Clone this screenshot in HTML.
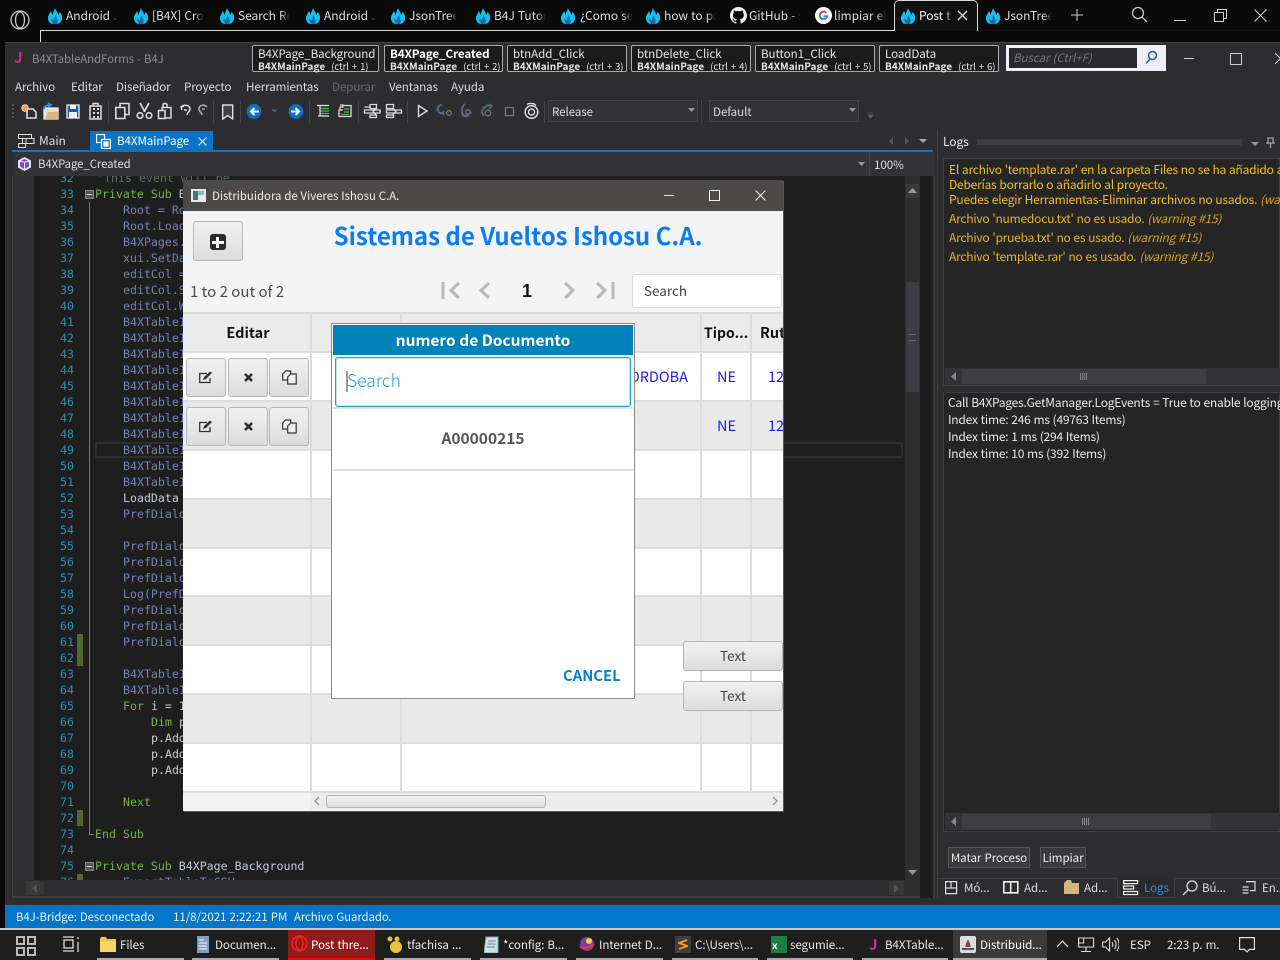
<!DOCTYPE html>
<html><head><meta charset="utf-8">
<style>
html,body{margin:0;padding:0;background:#0a0a0a}
#r{position:relative;width:1280px;height:960px;overflow:hidden;background:#0a0a0a;font-family:"Noto Sans CJK SC","Liberation Sans",sans-serif;font-size:11.6px;letter-spacing:-.08px;word-spacing:.6px;color:#ddd}
#r div,#r span.a,#r svg.a{position:absolute}
.t{white-space:nowrap;line-height:16px;height:16px}
.f{overflow:hidden;-webkit-mask-image:linear-gradient(90deg,#000 82%,transparent);mask-image:linear-gradient(90deg,#000 82%,transparent);font-size:12px}
.bm{height:27px;top:45px;border:1px solid #a9a9a9;border-radius:2px;background:#1b1b1c;box-sizing:border-box;width:120px}
.bm b,.bm i{position:absolute;left:5px;white-space:nowrap;font-style:normal}
.bm i.n{top:1px;font-size:11.6px;line-height:15px;color:#e6e6e6}
.bm i.s{top:14px;font-size:9.5px;line-height:11px;color:#e6e6e6;word-spacing:1px}
.bm i.s b{position:static;font-size:10px;letter-spacing:.05px}
.m{top:79px;color:#ddd;line-height:16px;white-space:nowrap}
.ln{left:34px;width:40px;text-align:right;color:#2b91af;font:11.6px/16px "DejaVu Sans Mono",monospace;height:16px;letter-spacing:0;word-spacing:0}
.c{left:95px;font:11.6px/16px "DejaVu Sans Mono",monospace;height:16px;white-space:pre;color:#7484b0;letter-spacing:0;word-spacing:0}
.k{color:#6fb544}.w{color:#c4cbd6}
.btn{background:linear-gradient(#f1f1f1,#dcdcdc);border:1px solid #b6b6b6;border-radius:3px;box-sizing:border-box}
.tk{top:937px;color:#e8e8e8;line-height:16px;white-space:nowrap}
.ul{top:958px;height:2px;background:#aaa}
.v{background:#dcdcdc;width:2px}
.h{background:#dcdcdc;height:2px}
.lg{font-size:12px;letter-spacing:-.22px;word-spacing:.4px;line-height:15px}
</style></head><body>
<svg width="0" height="0" style="position:absolute"><defs>
<symbol id="fl" viewBox="0 0 16 16"><path d="M1 9C2 6 3 5 4 3c1 2 1 3 1.500 4C6 5 7 3 8 0c1 3 3 4 3 7 1-1 1.500-2 1.500-3 2 2 3 4 2.500 7-.5 3-3 5-5 5H6C3 16 .5 13 1 9z" fill="#16c0ee"/><path d="M7 16c-2-1-3-3-2.500-6 1 1 1.500 2 2.500 2.500C7 10 8 8 9 7c0 3 3 5 1 9z" fill="#0b6fae"/></symbol>
</defs></svg>
<div id="r">

<!-- browser bar -->
<svg class="a" style="left:9px;top:9px" width="22" height="22" viewBox="0 0 22 22" fill="none" stroke="#c8c8c8" stroke-width="1.300"><circle cx="11" cy="11" r="9"/><ellipse cx="11" cy="11" rx="4.500" ry="8"/></svg>
<div style="left:40px;top:30px;width:854px;height:1px;background:#d8d8d8"></div>
<div style="left:978px;top:30px;width:302px;height:1px;background:#111"></div>
<div style="left:40px;top:30px;width:1px;height:12px;background:#d8d8d8"></div>
<div style="left:894px;top:0;width:84px;height:31px;background:#111;border:1px solid #d8d8d8;border-bottom:0;border-radius:5px 5px 0 0;box-sizing:border-box"></div>
<svg class="a" style="left:47px;top:8px" width="16" height="16"><use href="#fl"/></svg>
<svg class="a" style="left:133px;top:8px" width="16" height="16"><use href="#fl"/></svg>
<svg class="a" style="left:219px;top:8px" width="16" height="16"><use href="#fl"/></svg>
<svg class="a" style="left:305px;top:8px" width="16" height="16"><use href="#fl"/></svg>
<svg class="a" style="left:390px;top:8px" width="16" height="16"><use href="#fl"/></svg>
<svg class="a" style="left:475px;top:8px" width="16" height="16"><use href="#fl"/></svg>
<svg class="a" style="left:560px;top:8px" width="16" height="16"><use href="#fl"/></svg>
<svg class="a" style="left:645px;top:8px" width="16" height="16"><use href="#fl"/></svg>
<svg class="a" style="left:730px;top:7px" width="17" height="17" viewBox="0 0 16 16"><path fill="#eee" d="M8 0C3.600 0 0 3.600 0 8c0 3.500 2.300 6.500 5.500 7.600.4.100.5-.2.500-.4v-1.400c-2.200.5-2.700-1-2.700-1-.4-.9-.9-1.200-.9-1.200-.7-.5.100-.5.100-.5.800.1 1.200.8 1.200.8.700 1.200 1.900.9 2.300.7.100-.5.300-.9.500-1.100-1.800-.2-3.700-.9-3.700-4 0-.9.300-1.600.8-2.100-.1-.2-.4-1 .1-2.100 0 0 .7-.2 2.200.8.600-.2 1.300-.3 2-.3s1.400.1 2 .3c1.500-1 2.200-.8 2.200-.8.400 1.100.2 1.900.1 2.100.5.600.8 1.300.8 2.100 0 3.100-1.900 3.700-3.700 3.900.3.300.6.800.6 1.500v2.200c0 .2.100.5.600.4C13.700 14.500 16 11.500 16 8c0-4.400-3.600-8-8-8z"/></svg>
<svg class="a" style="left:815px;top:7px" width="17" height="17" viewBox="0 0 18 18"><circle cx="9" cy="9" r="9" fill="#fff"/><path d="M9 5a4 4 0 1 0 3.900 4.800H9" fill="none" stroke="#4285f4" stroke-width="2"/><path d="M5.500 7A4 4 0 0 1 12 6" fill="none" stroke="#ea4335" stroke-width="2"/><path d="M5.300 10.500A4 4 0 0 0 9 13" fill="none" stroke="#34a853" stroke-width="2"/></svg>
<svg class="a" style="left:900px;top:8px" width="16" height="16"><use href="#fl"/></svg>
<svg class="a" style="left:985px;top:8px" width="16" height="16"><use href="#fl"/></svg>
<div class="t f" style="left:66px;top:8px;width:52px">Android J</div>
<div class="t f" style="left:152px;top:8px;width:52px">[B4X] Cross</div>
<div class="t f" style="left:238px;top:8px;width:52px">Search Re</div>
<div class="t f" style="left:324px;top:8px;width:52px">Android J</div>
<div class="t f" style="left:409px;top:8px;width:48px">JsonTree -</div>
<div class="t f" style="left:494px;top:8px;width:52px">B4J Tutori</div>
<div class="t f" style="left:580px;top:8px;width:52px">¿Como se</div>
<div class="t f" style="left:664px;top:8px;width:52px">how to pa</div>
<div class="t f" style="left:749px;top:8px;width:52px">GitHub - s</div>
<div class="t f" style="left:834px;top:8px;width:52px">limpiar el</div>
<div class="t f" style="left:919px;top:8px;width:33px;color:#fff">Post th</div>
<div class="t f" style="left:1004px;top:8px;width:48px">JsonTree -</div>
<svg class="a" style="left:957px;top:10px" width="11" height="11" stroke="#ddd" stroke-width="1.300"><path d="M1 1l9 9M10 1l-9 9"/></svg>
<svg class="a" style="left:1071px;top:9px" width="12" height="12" stroke="#ccc"><path d="M6 0v12M0 6h12"/></svg>
<svg class="a" style="left:1131px;top:6px" width="17" height="17" fill="none" stroke="#c8c8c8" stroke-width="1.300"><circle cx="7" cy="7" r="5.500"/><path d="M11 11l5 5"/></svg>
<div style="left:1174px;top:20px;width:12px;height:1px;background:#ccc"></div>
<svg class="a" style="left:1214px;top:9px" width="13" height="13" fill="none" stroke="#ccc"><path d="M.5 3.500h9v9h-9zM3.500 3V.5h9v9H10"/></svg>
<svg class="a" style="left:1254px;top:9px" width="13" height="13" stroke="#ccc" stroke-width="1.100"><path d="M.5.500l12 12M12.500.5l-12 12"/></svg>

<!-- IDE window -->
<div style="left:5px;top:42px;width:1275px;height:863px;background:#2d2d30;border-top:1px solid #444;box-sizing:border-box"></div>
<div style="left:0;top:905px;width:1280px;height:23px;background:#0a0a0a"></div>
<div class="t" style="left:14px;top:50px;color:#d6278f;font-weight:bold;font-size:15px">J</div>
<div class="t" style="left:32px;top:51px;color:#8d8d8d;font-size:11.4px">B4XTableAndForms - B4J</div>

<div class="bm" style="left:252px;width:127px"><i class="n">B4XPage_Background</i><i class="s"><b>B4XMainPage</b>&nbsp; (ctrl + 1)</i></div>
<div class="bm" style="left:384px;width:119px"><i class="n" style="font-weight:bold;color:#fff">B4XPage_Created</i><i class="s"><b>B4XMainPage</b>&nbsp; (ctrl + 2)</i></div>
<div class="bm" style="left:507px"><i class="n">btnAdd_Click</i><i class="s"><b>B4XMainPage</b>&nbsp; (ctrl + 3)</i></div>
<div class="bm" style="left:631px"><i class="n">btnDelete_Click</i><i class="s"><b>B4XMainPage</b>&nbsp; (ctrl + 4)</i></div>
<div class="bm" style="left:755px"><i class="n">Button1_Click</i><i class="s"><b>B4XMainPage</b>&nbsp; (ctrl + 5)</i></div>
<div class="bm" style="left:879px"><i class="n">LoadData</i><i class="s"><b>B4XMainPage</b>&nbsp; (ctrl + 6)</i></div>

<div style="left:1006px;top:45px;width:160px;height:26px;background:#eef0f5"></div>
<div style="left:1009px;top:48px;width:128px;height:20px;background:#2a2a2c"></div>
<div class="t" style="left:1013px;top:50px;color:#777;font-style:italic;font-size:11.6px">Buscar (Ctrl+F)</div>
<svg class="a" style="left:1144px;top:50px" width="14" height="15" fill="none" stroke="#2a5fa8" stroke-width="1.600"><circle cx="8.500" cy="5.500" r="4"/><path d="M6 9l-4 4.500"/></svg>
<div style="left:1184px;top:58px;width:10px;height:1px;background:#ccc"></div>
<div style="left:1230px;top:53px;width:10px;height:10px;border:1px solid #ccc"></div>
<svg class="a" style="left:1275px;top:52px" width="5" height="12" stroke="#ccc"><path d="M0 1l11 11M11 1L0 12"/></svg>

<div class="m" style="left:15px">Archivo</div>
<div class="m" style="left:71px">Editar</div>
<div class="m" style="left:116px">Diseñador</div>
<div class="m" style="left:184px">Proyecto</div>
<div class="m" style="left:246px">Herramientas</div>
<div class="m" style="left:332px;color:#6a6a6a">Depurar</div>
<div class="m" style="left:389px">Ventanas</div>
<div class="m" style="left:451px">Ayuda</div>

<!-- toolbar -->
<svg class="a" style="left:10px;top:100px" width="560" height="24" viewBox="0 0 560 24" fill="none" stroke="#dcdcdc" stroke-width="1.300">
<path d="M2 5h2M2 9h2M2 13h2M2 17h2" stroke="#555" stroke-width="2"/>
<path d="M17 9h6l3 3v6h-9z" fill="#2d2d30" stroke-width="1.600"/><circle cx="15" cy="8" r="3.200" fill="#e8a040" stroke="#f4d9a8" stroke-width="1"/>
<path d="M34 8h14v11H34z" fill="#e9dcc4" stroke="#eee"/><path d="M35 19l3-7h10v7z" fill="#d9b582" stroke="none"/><path d="M34 9c0-3 3-4 6-4M38 3l3 2-3 2" stroke="#2a93dc" stroke-width="1.800"/>
<path d="M57 5h12v13H57z" fill="#0e5fb4" stroke="#f0f0f0"/><path d="M60 5h6v4h-6zM59 12h8v6h-8z" fill="#f0f0f0" stroke="none"/>
<path d="M80 6h11v13H80zM83 6V3.500h5V6" stroke-width="1.500"/><path d="M83 8h2v2h-2zM87 8h2v2h-2zM83 12h2v2h-2zM87 12h2v2h-2zM83 16h2v2h-2zM87 16h2v2h-2z" fill="#dcdcdc" stroke="none"/>
<path d="M98.500 1v22" stroke="#444" stroke-width="1"/>
<path d="M110 3.500h9v11h-9z" stroke-width="1.600"/><path d="M105.800 7.500h9v11h-9z" fill="#2d2d30" stroke-width="1.600"/>
<path d="M130 3l5 9M139 3l-5 9" stroke-width="1.800"/><circle cx="130" cy="15.500" r="2.800" stroke-width="1.600"/><circle cx="139" cy="15.500" r="2.800" stroke-width="1.600"/>
<path d="M153 8V5c0-2 4-2 4 0v3M152 7.500h9v10.500h-9z" stroke-width="1.500"/><path d="M148.500 10.500h6.500v8h-6.500z" fill="#2d2d30" stroke-width="1.500"/>
<path d="M171 7c3-3 9-2 9 2 0 3-3 3-3 6M174 6l-3 1 1 3M174 10h3" stroke-width="1.500"/>
<path d="M197 7c-3-3-8-2-8 2 0 3 3 3 3 6M192 9h3" stroke="#aaa" stroke-width="1.600"/>
<path d="M203.500 1v22" stroke="#444" stroke-width="1"/>
<path d="M212.700 5h10v14l-5-3.500-5 3.500z" fill="#3f3f42" stroke-width="1.400"/>
<path d="M230.500 1v22" stroke="#444" stroke-width="1"/>
<circle cx="244" cy="11.500" r="6.800" fill="#0f6ec2" stroke="#0f6ec2"/><path d="M249 11.500h-8M244.500 8l-3.500 3.500 3.500 3.500" stroke="#fff" stroke-width="2"/>
<path d="M261.500 9.500h6l-3 3z" fill="#3a6ea8" stroke="none"/>
<circle cx="286" cy="11.500" r="6.800" fill="#0f6ec2" stroke="#0f6ec2"/><path d="M281 11.500h8M285.500 8l3.500 3.500-3.500 3.500" stroke="#fff" stroke-width="2"/>
<path d="M299.500 1v22" stroke="#444" stroke-width="1"/>
<path d="M307 5.500h12"/><path d="M310 8.500h9M310 11h9M310 13.500h9" stroke="#4caf50"/><path d="M308 16h11"/><path d="M310 5.500v11"/>
<path d="M333 5.500h8v11h-12v-7" /><path d="M330 5h3v2h-3v3h3" stroke-width="1.200"/><path d="M334 9h5M334 12h5M331 14.500h8" stroke="#4caf50"/>
<path d="M348.500 1v22" stroke="#444" stroke-width="1"/>
<path d="M354.500 7h6M360 4.500h6.500v4H360zM354.500 10h15.500v3h-15.500zM360 15h6.500v2.500H360z" stroke-width="1.300"/><path d="M366 8.500l-3 3 3 3" stroke="#dcdcdc"/>
<path d="M376.500 4.500h7v4h-7zM376.500 10h15v3h-15zM376.500 15h7v2.500h-7z" stroke-width="1.300"/><path d="M383 8.500l3 3-3 3" stroke="#dcdcdc"/>
<path d="M397.500 1v22" stroke="#444" stroke-width="1"/>
<path d="M408.500 5.500l8.500 5.500-8.500 5.500z" stroke-width="1.400"/>
<path d="M432 5c-5 0-6 6-2 8h4" stroke="#4d6d84" stroke-width="2"/><path d="M434 11l-2 2 2 2" stroke="#4d6d84" stroke-width="1.500"/><circle cx="439" cy="13" r="2.300" stroke="#777"/>
<path d="M455 4c-4 3-4 9-1 12h4" stroke="#4d6d84" stroke-width="2"/><path d="M461 12l-3 4-2-2" stroke="#4d6d84" stroke-width="1.500"/><circle cx="458" cy="12" r="2.300" stroke="#777"/>
<path d="M482 6c-5-2-10 2-10 6 0 2 1 3 2 4" stroke="#4d6d84" stroke-width="2"/><path d="M479 4l3 2-3 3" stroke="#4d6d84" stroke-width="1.500"/><circle cx="478" cy="13" r="2.800" stroke="#777"/>
<path d="M495.500 7.500h8v8h-8z" stroke="#777"/>
<circle cx="521.500" cy="12" r="6.300" stroke-width="1.500"/><path d="M517 4.500c2-1.500 7-1.500 9 1M518.500 12a3 3 0 1 0 6 0 3 3 0 1 0-6 0" stroke-width="1.400"/>
<path d="M534.500 1v22" stroke="#444" stroke-width="1"/>
</svg>

<div style="left:548px;top:100px;width:150px;height:22px;background:#333337;border:1px solid #434346;box-sizing:border-box"></div>
<div class="t" style="left:552px;top:104px">Release</div>
<svg class="a" style="left:688px;top:108px" width="7" height="4"><path d="M0 0h7L3.500 4z" fill="#999"/></svg>
<div style="left:701px;top:100px;width:1px;height:24px;background:#444"></div>
<div style="left:709px;top:100px;width:150px;height:22px;background:#333337;border:1px solid #434346;box-sizing:border-box"></div>
<div class="t" style="left:713px;top:104px">Default</div>
<svg class="a" style="left:849px;top:108px" width="7" height="4"><path d="M0 0h7L3.500 4z" fill="#999"/></svg>
<svg class="a" style="left:867px;top:112px" width="7" height="7"><path d="M1 1h5M1 3h5l-2.500 3z" fill="#666" stroke="#666" stroke-width=".6"/></svg>

<!-- doc tabs -->
<div style="left:90px;top:131px;width:123px;height:20px;background:#0b74c9"></div>
<div style="left:12px;top:150px;width:921px;height:2px;background:#0b74c9"></div>
<svg class="a" style="left:18px;top:134px" width="18" height="14" fill="none" stroke="#ddd"><path d="M.5.500h13v4h-13zM4.500 5v4M.5 9.500h7v4h-7zM8 4.500h8v5H8z"/></svg>
<div class="t" style="left:39px;top:133px;font-size:12px">Main</div>
<svg class="a" style="left:96px;top:134px" width="15" height="15" fill="none" stroke="#fff" stroke-width="1.200"><path d="M.5.500h8v8h-8z"/><path d="M5.500 5.500h9v9h-9z" fill="#0b74c9"/><path d="M8 8h4v4H8z" fill="#fff"/></svg>
<div class="t" style="left:117px;top:133px;color:#fff">B4XMainPage</div>
<svg class="a" style="left:198px;top:137px" width="9" height="9" stroke="#e6e6e6" stroke-width="1.200"><path d="M.5.500l8 8M8.500.5l-8 8"/></svg>
<svg class="a" style="left:888px;top:136px" width="46" height="10"><path d="M5 1L1 5l4 4zM17 1l4 4-4 4z" fill="#555"/><path d="M31 3h8l-4 4z" fill="#aaa"/></svg>

<!-- sub row -->
<div style="left:13px;top:152px;width:922px;height:24px;background:#333337"></div>
<svg class="a" style="left:18px;top:157px" width="13" height="14" fill="#b197e8"><path d="M6.500 0L13 3.500v7L6.500 14 0 10.500v-7z" fill="#e8e3f6"/><path d="M6.500 2L11 4.500v5L6.500 12 2 9.500v-5z" fill="#7b4fc0"/><path d="M6.500 5L11 4.500M6.500 5L2 4.500M6.500 5v7" stroke="#e8e3f6" fill="none"/></svg>
<div class="t" style="left:38px;top:156px;font-size:11.4px">B4XPage_Created</div>
<svg class="a" style="left:858px;top:162px" width="7" height="4"><path d="M0 0h7L3.500 4z" fill="#999"/></svg>
<div style="left:869px;top:152px;width:1px;height:24px;background:#444"></div>
<div class="t" style="left:874px;top:157px">100%</div>
<svg class="a" style="left:920px;top:162px" width="7" height="4"><path d="M0 0h7L3.500 4z" fill="#999"/></svg>

<!-- code -->
<div style="left:13px;top:176px;width:892px;height:704px;background:#1e1e1e;overflow:hidden">
 <div style="left:0;top:0;width:21px;height:704px;background:#303032"></div>
</div>
<div style="left:13px;top:176px;width:892px;height:704px;overflow:hidden">
<div style="left:64px;top:458px;width:6px;height:32px;background:#4e6b2a"></div>
<div style="left:64px;top:634px;width:6px;height:16px;background:#4e6b2a"></div>
<div style="left:64px;top:698px;width:6px;height:16px;background:#4e6b2a"></div>
<div style="left:76px;top:26px;width:1px;height:632px;background:#777"></div>
<div style="left:76px;top:658px;width:5px;height:1px;background:#777"></div>
<div style="left:82px;top:266px;width:808px;height:16px;border:2px solid #2f2f2f;box-sizing:border-box"></div>
<div style="left:72px;top:14px;width:7px;height:7px;background:#555;border:1px solid #888"></div>
<div style="left:74px;top:18px;width:5px;height:1px;background:#ddd"></div>
<div style="left:72px;top:686px;width:7px;height:7px;background:#555;border:1px solid #888"></div>
<div style="left:74px;top:690px;width:5px;height:1px;background:#ddd"></div>

<div class="ln" style="left:21px;top:-6px">32</div><div class="c" style="left:84px;top:-6px;color:#5f6f5f">'This event will be</div>
<div class="ln" style="left:21px;top:10px">33</div><div class="c" style="left:82px;top:10px"><span class="k">Private Sub</span> <span class="w">B4XPage_Created</span></div>
<div class="ln" style="left:21px;top:26px">34</div><div class="c" style="left:110px;top:26px">Root = Root1</div>
<div class="ln" style="left:21px;top:42px">35</div><div class="c" style="left:110px;top:42px">Root.LoadLayout</div>
<div class="ln" style="left:21px;top:58px">36</div><div class="c" style="left:110px;top:58px">B4XPages.SetTitle</div>
<div class="ln" style="left:21px;top:74px">37</div><div class="c" style="left:110px;top:74px">xui.SetDataFolder</div>
<div class="ln" style="left:21px;top:90px">38</div><div class="c" style="left:110px;top:90px">editCol = B4XTable</div>
<div class="ln" style="left:21px;top:106px">39</div><div class="c" style="left:110px;top:106px">editCol.Searchable</div>
<div class="ln" style="left:21px;top:122px">40</div><div class="c" style="left:110px;top:122px">editCol.Width = 100</div>
<div class="ln" style="left:21px;top:138px">41</div><div class="c" style="left:110px;top:138px">B4XTable1.AddColumn</div>
<div class="ln" style="left:21px;top:154px">42</div><div class="c" style="left:110px;top:154px">B4XTable1.AddColumn</div>
<div class="ln" style="left:21px;top:170px">43</div><div class="c" style="left:110px;top:170px">B4XTable1.AddColumn</div>
<div class="ln" style="left:21px;top:186px">44</div><div class="c" style="left:110px;top:186px">B4XTable1.AddColumn</div>
<div class="ln" style="left:21px;top:202px">45</div><div class="c" style="left:110px;top:202px">B4XTable1.AddColumn</div>
<div class="ln" style="left:21px;top:218px">46</div><div class="c" style="left:110px;top:218px">B4XTable1.AddColumn</div>
<div class="ln" style="left:21px;top:234px">47</div><div class="c" style="left:110px;top:234px">B4XTable1.AddColumn</div>
<div class="ln" style="left:21px;top:250px">48</div><div class="c" style="left:110px;top:250px">B4XTable1.AddColumn</div>
<div class="ln" style="left:21px;top:266px">49</div><div class="c" style="left:110px;top:266px">B4XTable1.AddColumn</div>
<div class="ln" style="left:21px;top:282px">50</div><div class="c" style="left:110px;top:282px">B4XTable1.AddColumn</div>
<div class="ln" style="left:21px;top:298px">51</div><div class="c" style="left:110px;top:298px">B4XTable1.AddColumn</div>
<div class="ln" style="left:21px;top:314px">52</div><div class="c" style="left:110px;top:314px;color:#c4cbd6">LoadData</div>
<div class="ln" style="left:21px;top:330px">53</div><div class="c" style="left:110px;top:330px">PrefDialog.Initialize</div>
<div class="ln" style="left:21px;top:346px">54</div>
<div class="ln" style="left:21px;top:362px">55</div><div class="c" style="left:110px;top:362px">PrefDialog.Dialog</div>
<div class="ln" style="left:21px;top:378px">56</div><div class="c" style="left:110px;top:378px">PrefDialog.Dialog</div>
<div class="ln" style="left:21px;top:394px">57</div><div class="c" style="left:110px;top:394px">PrefDialog.Dialog</div>
<div class="ln" style="left:21px;top:410px">58</div><div class="c" style="left:110px;top:410px">Log(PrefDialog</div>
<div class="ln" style="left:21px;top:426px">59</div><div class="c" style="left:110px;top:426px">PrefDialog.Dialog</div>
<div class="ln" style="left:21px;top:442px">60</div><div class="c" style="left:110px;top:442px">PrefDialog.Dialog</div>
<div class="ln" style="left:21px;top:458px">61</div><div class="c" style="left:110px;top:458px">PrefDialog.Dialog</div>
<div class="ln" style="left:21px;top:474px">62</div>
<div class="ln" style="left:21px;top:490px">63</div><div class="c" style="left:110px;top:490px">B4XTable1.MaximumRows</div>
<div class="ln" style="left:21px;top:506px">64</div><div class="c" style="left:110px;top:506px">B4XTable1.NumberOfColumns</div>
<div class="ln" style="left:21px;top:522px">65</div><div class="c" style="left:110px;top:522px"><span class="k">For</span> <span class="w">i = 1 To 10</span></div>
<div class="ln" style="left:21px;top:538px">66</div><div class="c" style="left:138px;top:538px"><span class="k">Dim</span> <span class="w">p As Int</span></div>
<div class="ln" style="left:21px;top:554px">67</div><div class="c w" style="left:138px;top:554px;color:#c4cbd6">p.AddAll</div>
<div class="ln" style="left:21px;top:570px">68</div><div class="c w" style="left:138px;top:570px;color:#c4cbd6">p.AddAll</div>
<div class="ln" style="left:21px;top:586px">69</div><div class="c w" style="left:138px;top:586px;color:#c4cbd6">p.AddAll</div>
<div class="ln" style="left:21px;top:602px">70</div>
<div class="ln" style="left:21px;top:618px">71</div><div class="c k" style="left:110px;top:618px;color:#6fb544">Next</div>
<div class="ln" style="left:21px;top:634px">72</div>
<div class="ln" style="left:21px;top:650px">73</div><div class="c k" style="left:82px;top:650px;color:#6fb544">End Sub</div>
<div class="ln" style="left:21px;top:666px">74</div>
<div class="ln" style="left:21px;top:682px">75</div><div class="c" style="left:82px;top:682px"><span class="k">Private Sub</span> <span class="w">B4XPage_Background</span></div>
<div class="ln" style="left:21px;top:698px">76</div><div class="c" style="left:110px;top:698px">ExportTableToCSV</div>
</div>

<!-- code scrollbars -->
<div style="left:905px;top:176px;width:15px;height:720px;background:#2d2d30"></div>
<div style="left:906px;top:282px;width:13px;height:110px;background:#3e3e42"></div>
<div style="left:906px;top:184px;width:13px;height:14px;background:#3a3a3d"></div>
<svg class="a" style="left:908px;top:188px" width="9" height="5"><path d="M0 5h9L4.500 0z" fill="#999"/></svg>
<svg class="a" style="left:908px;top:870px" width="9" height="5"><path d="M0 0h9L4.500 5z" fill="#999"/></svg>
<div style="left:909px;top:334px;width:7px;height:5px;border-top:1px solid #666;border-bottom:1px solid #666"></div>
<div style="left:13px;top:880px;width:892px;height:16px;background:#2d2d30"></div>
<div style="left:26px;top:881px;width:18px;height:14px;background:#383839"></div>
<svg class="a" style="left:32px;top:884px" width="5" height="9"><path d="M5 0v9L0 4.500z" fill="#555"/></svg>
<div style="left:889px;top:881px;width:15px;height:14px;background:#383839"></div>
<svg class="a" style="left:894px;top:884px" width="5" height="9"><path d="M0 0v9l5-4.500z" fill="#555"/></svg>
<div style="left:12px;top:896px;width:923px;height:2px;background:#3f3f41"></div>
<div style="left:12px;top:176px;width:1px;height:720px;background:#3f3f41"></div>
<div style="left:920px;top:152px;width:15px;height:746px;background:#1c1c1c"></div>
<div style="left:933px;top:152px;width:2px;height:746px;background:#3f3f41"></div>
<div style="left:920px;top:152px;width:15px;height:24px;background:#333337"></div>
<div style="left:5px;top:125px;width:7px;height:780px;background:#2d2d30"></div>

<!-- Dialog -->
<div style="left:183px;top:180px;width:600px;height:631px;background:#f4f4f4;box-shadow:1px 1px 0 #555;overflow:hidden;letter-spacing:0;word-spacing:0" id="dlg">
 <div style="left:0;top:0;width:600px;height:31px;background:#4b4a48"></div>
 <svg class="a" style="left:8px;top:9px" width="15" height="13"><rect width="15" height="13" fill="#e8e8e8"/><rect x="2" y="2" width="5" height="9" fill="#46786f"/><rect x="7" y="2" width="6" height="4" fill="#8eb4d8"/></svg>
 <div class="t" style="left:29px;top:8px;color:#eee;font-size:11.4px;word-spacing:.3px">Distribuidora de Viveres Ishosu C.A.</div>
 <div style="left:481px;top:15px;width:10px;height:1px;background:#ddd"></div>
 <div style="left:526px;top:10px;width:9px;height:9px;border:1px solid #eee"></div>
 <svg class="a" style="left:572px;top:10px" width="11" height="11" stroke="#eee" stroke-width="1.100"><path d="M.5.500l10 10M10.500.5l-10 10"/></svg>

 <div class="btn" style="left:10px;top:41px;width:50px;height:40px"></div>
 <div style="left:27px;top:54px;width:16px;height:16px;background:#2b2b2b;border-radius:3px"></div>
 <div style="left:29px;top:61px;width:12px;height:3px;background:#fff"></div>
 <div style="left:33px;top:57px;width:3px;height:11px;background:#fff"></div>

 <div class="t" style="left:0;width:670px;text-align:center;top:40px;height:30px;line-height:30px;color:#0a7df5;font-weight:bold;font-size:24px">Sistemas de Vueltos Ishosu C.A.</div>
 <div class="t" style="left:7px;top:104px;color:#4a4a4a;font-size:15px;line-height:16px">1 to 2 out of 2</div>

 <svg class="a" style="left:258px;top:101px" width="175" height="20" fill="none" stroke="#b8b8b8" stroke-width="3"><path d="M2 1v17M18 2l-8 7.500 8 7.500M48 2l-8 7.500 8 7.500M124 2l8 7.500-8 7.500M156 2l8 7.500-8 7.500M172 1v17"/></svg>
 <div class="t" style="left:339px;top:101px;height:20px;line-height:20px;color:#111;font-weight:bold;font-size:18px;font-family:'Liberation Sans',sans-serif">1</div>
 <div style="left:449px;top:94px;width:150px;height:34px;background:#fff;border:1px solid #d8d8d8;border-radius:3px;box-sizing:border-box"></div>
 <div class="t" style="left:461px;top:102px;color:#444;font-size:13.5px">Search</div>

 <!-- table -->
 <div style="left:0;top:133px;width:600px;height:479px;background:#fff"></div>
 <div style="left:0;top:133px;width:600px;height:39px;background:#ebebeb"></div>
 <div style="left:0;top:222px;width:600px;height:48px;background:#e9e9e9"></div>
 <div style="left:0;top:319px;width:600px;height:48px;background:#e9e9e9"></div>
 <div style="left:0;top:416px;width:600px;height:48px;background:#e9e9e9"></div>
 <div style="left:0;top:513px;width:600px;height:49px;background:#e9e9e9"></div>
 <div class="h" style="left:0;top:132px;width:600px"></div>
 <div class="h" style="left:0;top:171px;width:600px"></div>
 <div class="h" style="left:0;top:220px;width:600px"></div>
 <div class="h" style="left:0;top:269px;width:600px"></div>
 <div class="h" style="left:0;top:318px;width:600px"></div>
 <div class="h" style="left:0;top:367px;width:600px"></div>
 <div class="h" style="left:0;top:415px;width:600px"></div>
 <div class="h" style="left:0;top:464px;width:600px"></div>
 <div class="h" style="left:0;top:513px;width:600px"></div>
 <div class="h" style="left:0;top:562px;width:600px"></div>
 <div class="h" style="left:0;top:611px;width:600px"></div>
 <div class="v" style="left:127px;top:133px;height:478px"></div>
 <div class="v" style="left:217px;top:133px;height:478px"></div>
 <div class="v" style="left:517px;top:133px;height:478px"></div>
 <div class="v" style="left:567px;top:133px;height:478px"></div>

 <div class="t" style="left:0;width:130px;text-align:center;top:145px;color:#111;font-weight:bold;font-size:14.5px">Editar</div>
 <div class="t" style="left:521px;top:145px;color:#111;font-weight:bold;font-size:14px">Tipo...</div>
 <div class="t" style="left:577px;top:145px;color:#111;font-weight:bold;font-size:14.5px">Rut</div>
 <div class="t" style="right:95px;top:189px;color:#1f1fe8;font-size:14.5px">CORDOBA</div>
 <div class="t" style="left:534px;top:189px;color:#1f1fe8;font-size:14.5px">NE</div>
 <div class="t" style="left:534px;top:238px;color:#1f1fe8;font-size:14.5px">NE</div>
 <div class="t" style="left:585px;top:189px;color:#1f1fe8;font-size:14.5px">12</div>
 <div class="t" style="left:585px;top:238px;color:#1f1fe8;font-size:14.5px">12</div>

 <div class="btn" style="left:3px;top:178px;width:40px;height:39px"></div>
 <div class="btn" style="left:45px;top:178px;width:40px;height:39px"></div>
 <div class="btn" style="left:86px;top:178px;width:40px;height:39px"></div>
 <div class="btn" style="left:3px;top:227px;width:40px;height:39px"></div>
 <div class="btn" style="left:45px;top:227px;width:40px;height:39px"></div>
 <div class="btn" style="left:86px;top:227px;width:40px;height:39px"></div>
 <svg class="a" style="left:16px;top:191px" width="14" height="13" fill="none" stroke="#333" stroke-width="1.300"><path d="M11 7v4.500H.7V2.500H8"/><path d="M5 6l-1 3 3-1 6-6-2-1.500z" fill="#333" stroke="none"/></svg>
 <svg class="a" style="left:16px;top:240px" width="14" height="13" fill="none" stroke="#333" stroke-width="1.300"><path d="M11 7v4.500H.7V2.500H8"/><path d="M5 6l-1 3 3-1 6-6-2-1.500z" fill="#333" stroke="none"/></svg>
 <svg class="a" style="left:61px;top:193px" width="9" height="9" stroke="#2b2b2b" stroke-width="2.600"><path d="M1 1l7 7M8 1L1 8"/></svg>
 <svg class="a" style="left:61px;top:242px" width="9" height="9" stroke="#2b2b2b" stroke-width="2.600"><path d="M1 1l7 7M8 1L1 8"/></svg>
 <svg class="a" style="left:99px;top:190px" width="15" height="15" fill="#f0f0f0" stroke="#333" stroke-width="1.200"><path d="M.7 10V4l3-3h5v9z"/><path d="M5.700 14V7l3-3h5.500v10z"/></svg>
 <svg class="a" style="left:99px;top:239px" width="15" height="15" fill="#f0f0f0" stroke="#333" stroke-width="1.200"><path d="M.7 10V4l3-3h5v9z"/><path d="M5.700 14V7l3-3h5.500v10z"/></svg>

 <!-- h scrollbar -->
 <div style="left:127px;top:613px;width:473px;height:17px;background:#ececec"></div>
 <div class="btn" style="left:143px;top:615px;width:220px;height:13px;border-radius:3px"></div>
 <svg class="a" style="left:131px;top:616px" width="6" height="10" fill="none" stroke="#888" stroke-width="1.200"><path d="M5 1L1 5l4 4"/></svg>
 <svg class="a" style="left:589px;top:616px" width="6" height="10" fill="none" stroke="#888" stroke-width="1.200"><path d="M1 1l4 4-4 4"/></svg>

 <!-- Text buttons -->
 <div class="btn" style="left:500px;top:461px;width:100px;height:30px"></div>
 <div class="t" style="left:500px;width:100px;text-align:center;top:467px;color:#444;font-size:13.5px">Text</div>
 <div class="btn" style="left:500px;top:501px;width:100px;height:30px"></div>
 <div class="t" style="left:500px;width:100px;text-align:center;top:507px;color:#444;font-size:13.5px">Text</div>

 <!-- modal -->
 <div style="left:148px;top:143px;width:304px;height:376px;background:#fff;border:1px solid #8a8a8a;box-sizing:border-box"></div>
 <div style="left:150px;top:145px;width:300px;height:30px;background:#0083b8"></div>
 <div class="t" style="left:150px;width:300px;text-align:center;top:152px;color:#fff;font-weight:bold;font-size:15.5px">numero de Documento</div>
 <div style="left:150px;top:175px;width:300px;height:4px;background:#eee"></div>
 <div style="left:152px;top:177px;width:296px;height:50px;background:#fff;border:1px solid #1aa7dd;border-radius:3px;box-shadow:inset 0 0 0 1px #bfe6f5;box-sizing:border-box"></div>
 <div style="left:163px;top:191px;width:2px;height:21px;background:#999"></div>
 <div class="t" style="left:164px;top:191px;height:20px;line-height:20px;color:#1e9bef;font-size:17.5px;font-weight:300">Search</div>
 <div style="left:150px;top:227px;width:300px;height:2px;background:#e4e4e4"></div>
 <div class="t" style="left:150px;width:300px;text-align:center;top:250px;color:#555;font-weight:bold;font-size:15.5px">A00000215</div>
 <div style="left:150px;top:289px;width:300px;height:2px;background:#dedede"></div>
 <div class="t" style="left:380px;top:488px;color:#0a7fc8;font-weight:bold;font-size:14.8px">CANCEL</div>
</div>

<!-- Logs panel -->
<div class="t" style="left:943px;top:134px;color:#eee;font-size:12px">Logs</div>
<div style="left:977px;top:139px;width:265px;height:6px;background-image:radial-gradient(#666 .6px,transparent .8px);background-size:2px 2px"></div>
<svg class="a" style="left:1251px;top:142px" width="8" height="4"><path d="M0 0h8L4 4z" fill="#999"/></svg>
<svg class="a" style="left:1266px;top:137px" width="9" height="11" fill="none" stroke="#aaa" stroke-width="1.200"><path d="M2 1h5v5H2zM0 6h9M4.500 6v5"/></svg>
<div style="left:937px;top:130px;width:1px;height:768px;background:#3f3f41"></div>
<div style="left:943px;top:158px;width:337px;height:228px;background:#252526;border:1px solid #3f3f41;box-sizing:border-box"></div>
<div class="t lg" style="left:949px;top:162px;color:#f0c020;width:331px;overflow:hidden">El archivo 'template.rar' en la carpeta Files no se ha añadido a la</div>
<div class="t lg" style="left:949px;top:177px;color:#f0c020">Deberías borrarlo o añadirlo al proyecto.</div>
<div class="t lg" style="left:949px;top:192px;color:#f0c020;width:331px;overflow:hidden">Puedes elegir Herramientas-Eliminar archivos no usados. <i style="color:#d6a21a">(warni</i></div>
<div class="t lg" style="left:949px;top:211px;color:#e6b422">Archivo 'numedocu.txt' no es usado. <i style="color:#d6a21a">(warning #15)</i></div>
<div class="t lg" style="left:949px;top:230px;color:#e6b422">Archivo 'prueba.txt' no es usado. <i style="color:#d6a21a">(warning #15)</i></div>
<div class="t lg" style="left:949px;top:249px;color:#e6b422">Archivo 'template.rar' no es usado. <i style="color:#d6a21a">(warning #15)</i></div>
<div style="left:945px;top:368px;width:335px;height:17px;background:#333337"></div>
<div style="left:962px;top:369px;width:244px;height:15px;background:#3e3e42"></div>
<svg class="a" style="left:951px;top:372px" width="5" height="9"><path d="M5 0v9L0 4.500z" fill="#888"/></svg>
<div style="left:1080px;top:373px;width:7px;height:7px;background:repeating-linear-gradient(90deg,#888 0 1px,transparent 1px 2px)"></div>

<div style="left:943px;top:392px;width:337px;height:440px;background:#252526;border:1px solid #3f3f41;box-sizing:border-box"></div>
<div class="t lg" style="left:948px;top:395px;color:#e8e8e8;width:332px;overflow:hidden;line-height:16px">Call B4XPages.GetManager.LogEvents = True to enable logging</div>
<div class="t lg" style="left:948px;top:412px;color:#e8e8e8;line-height:16px">Index time: 246 ms (49763 Items)</div>
<div class="t lg" style="left:948px;top:429px;color:#e8e8e8;line-height:16px">Index time: 1 ms (294 Items)</div>
<div class="t lg" style="left:948px;top:446px;color:#e8e8e8;line-height:16px">Index time: 10 ms (392 Items)</div>
<div style="left:945px;top:813px;width:335px;height:17px;background:#333337"></div>
<div style="left:962px;top:814px;width:249px;height:15px;background:#3e3e42"></div>
<svg class="a" style="left:951px;top:817px" width="5" height="9"><path d="M5 0v9L0 4.500z" fill="#888"/></svg>
<div style="left:1082px;top:818px;width:7px;height:7px;background:repeating-linear-gradient(90deg,#888 0 1px,transparent 1px 2px)"></div>

<div style="left:948px;top:847px;width:82px;height:21px;background:#3a3a3d;border:1px solid #555;box-sizing:border-box"></div>
<div class="t" style="left:948px;width:82px;text-align:center;top:850px;color:#eee">Matar Proceso</div>
<div style="left:1040px;top:847px;width:46px;height:21px;background:#3a3a3d;border:1px solid #555;box-sizing:border-box"></div>
<div class="t" style="left:1040px;width:46px;text-align:center;top:850px;color:#eee">Limpiar</div>

<div style="left:937px;top:878px;width:343px;height:1px;background:#3f3f41"></div>
<div style="left:1117px;top:878px;width:58px;height:20px;background:#2a2a2c;border:1px solid #3f3f41;border-top:1px solid #2d2d30;box-sizing:border-box"></div>
<svg class="a" style="left:945px;top:881px" width="13" height="14" fill="none" stroke="#ddd" stroke-width="1.200"><path d="M.6.600h11v12H.6zM.6 7h11M6 .6V7"/></svg>
<div class="t" style="left:964px;top:880px">Mó...</div>
<svg class="a" style="left:1003px;top:881px" width="16" height="13" fill="none" stroke="#eee" stroke-width="1.600"><path d="M.8.800h14v11H.8zM7.700.8v11"/></svg>
<div class="t" style="left:1024px;top:880px">Ad...</div>
<svg class="a" style="left:1064px;top:880px" width="15" height="14"><path d="M0 3l3-3h4l1 3h7v11H0z" fill="#d6b57c"/></svg>
<div class="t" style="left:1084px;top:880px">Ad...</div>
<svg class="a" style="left:1123px;top:880px" width="16" height="16" fill="none" stroke="#eee" stroke-width="1.300"><path d="M.6.600h14v3H.6zM.6 6h10v3H.6zM.6 11.500h14v3H.6z"/></svg>
<div class="t" style="left:1144px;top:880px;color:#2f8fd6">Logs</div>
<svg class="a" style="left:1182px;top:880px" width="16" height="16" fill="none" stroke="#ddd" stroke-width="1.300"><circle cx="10" cy="6" r="5"/><path d="M6 10l-5 5"/></svg>
<div class="t" style="left:1202px;top:880px">Bú...</div>
<svg class="a" style="left:1242px;top:881px" width="14" height="14" fill="none" stroke="#ddd" stroke-width="1.200"><path d="M4 .6h9v9H8M.6 9h6M.6 12h6M.6 6h6"/></svg>
<div class="t" style="left:1262px;top:880px">En...</div>

<!-- status -->
<div style="left:5px;top:905px;width:1275px;height:23px;background:#0176cd"></div>
<div style="left:0;top:905px;width:5px;height:25px;background:#0a0a0a"></div>
<div class="t" style="left:16px;top:909px;color:#e8f1fa;font-size:11.4px">B4J-Bridge: Desconectado</div>
<div class="t" style="left:173px;top:909px;color:#e8f1fa">11/8/2021 2:22:21 PM</div>
<div class="t" style="left:294px;top:909px;color:#e8f1fa;font-size:11.4px">Archivo Guardado.</div>
<div style="left:0;top:928px;width:1280px;height:2px;background:#c8c8c8"></div>

<!-- taskbar -->
<div style="left:0;top:930px;width:1280px;height:30px;background:#1e1e1e"></div>
<div style="left:288px;top:930px;width:87px;height:30px;background:#8f1b1b"></div>
<div style="left:953px;top:930px;width:94px;height:30px;background:#3a3a3a"></div>
<div class="ul" style="left:97px;width:87px"></div>
<div class="ul" style="left:192px;width:87px"></div>
<div class="ul" style="left:288px;width:87px;background:#ff0000"></div>
<div class="ul" style="left:384px;width:87px"></div>
<div class="ul" style="left:480px;width:87px"></div>
<div class="ul" style="left:576px;width:87px"></div>
<div class="ul" style="left:672px;width:86px"></div>
<div class="ul" style="left:767px;width:86px"></div>
<div class="ul" style="left:862px;width:86px"></div>
<div class="ul" style="left:953px;width:94px"></div>

<svg class="a" style="left:16px;top:936px" width="20" height="20" fill="none" stroke="#bbb" stroke-width="2"><path d="M1 1h7v7H1zM12 1h7v7h-7zM1 12h7v7H1zM12 12h7v7h-7z"/></svg>
<svg class="a" style="left:63px;top:936px" width="17" height="17" fill="none" stroke="#ddd" stroke-width="1.300"><path d="M0 1h11M0 15h11M1 4h9v8H1zM15 1v2M15 6v10"/></svg>
<svg class="a" style="left:100px;top:937px" width="16" height="15"><path d="M0 2l1-2h5l1 2h9v13H0z" fill="#f5c542"/><path d="M0 4h16v11H0z" fill="#fbd35f"/></svg>
<div class="tk" style="left:120px">Files</div>
<svg class="a" style="left:197px;top:936px" width="12" height="17"><rect width="12" height="17" fill="#7f9dbd"/><path d="M2 4h5M2 7h8M2 10h8M2 13h8" stroke="#fff"/></svg>
<div class="tk" style="left:215px">Documen...</div>
<svg class="a" style="left:291px;top:935px" width="17" height="17" fill="none" stroke="#ff2020" stroke-width="1.400"><circle cx="8.500" cy="8.500" r="7.500"/><ellipse cx="8.500" cy="8.500" rx="3.500" ry="6.500"/></svg>
<div class="tk" style="left:311px;color:#fff">Post thre...</div>
<svg class="a" style="left:387px;top:936px" width="16" height="17" fill="#e8c040"><circle cx="9" cy="11" r="6"/><circle cx="3" cy="3" r="2.500"/><circle cx="10" cy="3" r="2.500"/></svg>
<div class="tk" style="left:407px">tfachisa ...</div>
<svg class="a" style="left:484px;top:936px" width="15" height="17"><path d="M2 1h12v16H0z" fill="#cfe0ea" stroke="#8aa" /><path d="M4 5h8M3.500 8h8M3 11h8" stroke="#688"/></svg>
<div class="tk" style="left:503px">*config: B...</div>
<svg class="a" style="left:579px;top:936px" width="16" height="16"><circle cx="8" cy="8" r="7" fill="#7a3fa0"/><circle cx="10" cy="5" r="3" fill="#f0d040"/><path d="M1 11c5 3 10 0 14-3" stroke="#e04030" stroke-width="2" fill="none"/></svg>
<div class="tk" style="left:599px">Internet D...</div>
<div style="left:675px;top:936px;width:16px;height:17px;background:#3e3e3e"></div>
<svg class="a" style="left:678px;top:938px" width="10" height="13" stroke="#f59a1b" stroke-width="2" fill="none"><path d="M9 2L1 5l8 3-8 3"/></svg>
<div class="tk" style="left:695px">C:\Users\...</div>
<div style="left:771px;top:936px;width:16px;height:17px;background:#1d7d45"></div>
<div class="t" style="left:772px;top:937px;color:#fff;font-weight:bold;font-size:10px;line-height:15px;height:15px">x</div>
<div class="tk" style="left:790px">segumie...</div>
<div class="t" style="left:869px;top:937px;color:#d6278f;font-weight:bold;font-size:15px">J</div>
<div class="tk" style="left:885px">B4XTable...</div>
<svg class="a" style="left:960px;top:936px" width="16" height="17"><rect width="16" height="17" rx="2" fill="#d8dbe0"/><path d="M8 3l3 8H5z" fill="#555"/><circle cx="8" cy="8" r="2" fill="#c22"/><path d="M2 13h12" stroke="#555" stroke-width="2"/></svg>
<div class="tk" style="left:980px;color:#fff">Distribuid...</div>

<svg class="a" style="left:1056px;top:940px" width="13" height="8" fill="none" stroke="#ddd" stroke-width="1.200"><path d="M1 7l5.500-6L12 7"/></svg>
<svg class="a" style="left:1078px;top:936px" width="17" height="17" fill="none" stroke="#ddd" stroke-width="1.100"><path d="M.6 2h15v9H.6zM8 11v4M3 15.500h10"/><path d="M.6 2h5v5H.6z"/></svg>
<svg class="a" style="left:1102px;top:937px" width="17" height="15" fill="none" stroke="#ddd" stroke-width="1.100"><path d="M.6 5h3l4-4v13l-4-4h-3zM10 5c1 1.500 1 3.500 0 5M12.500 3c2 2.500 2 6.500 0 9M14.800 1c3 3.500 3 9.500 0 13"/></svg>
<div class="tk" style="left:1130px">ESP</div>
<div class="tk" style="left:1167px">2:23 p. m.</div>
<svg class="a" style="left:1239px;top:937px" width="16" height="16" fill="none" stroke="#ddd" stroke-width="1.200"><path d="M.6.600h14.800v11.800h-5l-2.400 2.600-2.400-2.600h-5z"/></svg>

</div>
</body></html>
